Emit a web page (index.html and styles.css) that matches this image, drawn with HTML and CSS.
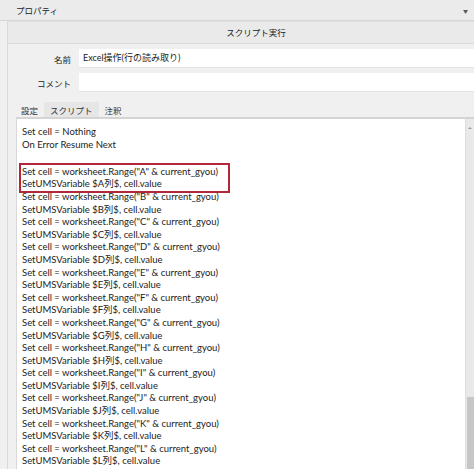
FILE: index.html
```html
<!DOCTYPE html>
<html lang="ja">
<head>
    <meta charset="UTF-8">
    <title>プロパティ</title>
    <link rel="stylesheet" href="styles.css">
</head>
<body>
    <header class="titlebar">
        <span>プロパティ</span>
        <span class="arrow">▼</span>
    </header>
    <div class="panel">
        <div class="caption">スクリプト実行</div>
        <div class="row">
            <label>名前</label>
            <div class="input">Excel操作(行の読み取り)</div>
        </div>
        <div class="row">
            <label>コメント</label>
            <div class="input"></div>
        </div>
        <nav class="tabs">
            <a href="#">設定</a>
            <a href="#" class="active">スクリプト</a>
            <a href="#">注釈</a>
        </nav>
        <div class="editor">
            <div class="code">
                <div class="line">Set cell = Nothing</div>
                <div class="line">On Error Resume Next</div>
                <div class="line">&nbsp;</div>
                <div class="mark">
                    <div class="line">Set cell = worksheet.Range("A" &amp; current_gyou)</div>
                    <div class="line">SetUMSVariable $A列$, cell.value</div>
                </div>
                <div class="line">Set cell = worksheet.Range("B" &amp; current_gyou)</div>
                <div class="line">SetUMSVariable $B列$, cell.value</div>
                <div class="line">Set cell = worksheet.Range("C" &amp; current_gyou)</div>
                <div class="line">SetUMSVariable $C列$, cell.value</div>
                <div class="line">Set cell = worksheet.Range("D" &amp; current_gyou)</div>
                <div class="line">SetUMSVariable $D列$, cell.value</div>
                <div class="line">Set cell = worksheet.Range("E" &amp; current_gyou)</div>
                <div class="line">SetUMSVariable $E列$, cell.value</div>
                <div class="line">Set cell = worksheet.Range("F" &amp; current_gyou)</div>
                <div class="line">SetUMSVariable $F列$, cell.value</div>
                <div class="line">Set cell = worksheet.Range("G" &amp; current_gyou)</div>
                <div class="line">SetUMSVariable $G列$, cell.value</div>
                <div class="line">Set cell = worksheet.Range("H" &amp; current_gyou)</div>
                <div class="line">SetUMSVariable $H列$, cell.value</div>
                <div class="line">Set cell = worksheet.Range("I" &amp; current_gyou)</div>
                <div class="line">SetUMSVariable $I列$, cell.value</div>
                <div class="line">Set cell = worksheet.Range("J" &amp; current_gyou)</div>
                <div class="line">SetUMSVariable $J列$, cell.value</div>
                <div class="line">Set cell = worksheet.Range("K" &amp; current_gyou)</div>
                <div class="line">SetUMSVariable $K列$, cell.value</div>
                <div class="line">Set cell = worksheet.Range("L" &amp; current_gyou)</div>
                <div class="line">SetUMSVariable $L列$, cell.value</div>
                <div class="line">Set cell = worksheet.Range("M" &amp; current_gyou)</div>
            </div>
            <div class="scroll">
                <span class="up"></span>
                <span class="thumb"></span>
            </div>
        </div>
    </div>
</body>
</html>
```

FILE: styles.css
```css
html, body {
    margin:0; height:469px;
    overflow:hidden;
    background:#f0f0f0;
    font-family:Lato, "Noto Sans CJK JP", sans-serif;
    font-size:9.5px; color:#222;
}
body {display:flex; flex-direction:column;}
.titlebar {
    flex:none;
    height:20px;
    display:flex; align-items:center; justify-content:space-between;
    padding:0 6px 0 16px;
    font-size:8.5px;
    background:#ebebeb;
    border-bottom:1px solid #d6d6d6;
}
.titlebar .arrow {font-size:5px; color:#555;}
.panel {
    flex:1; min-height:0;
    display:flex; flex-direction:column;
    margin-left:7px;
    border-left:1px solid #d9d9d9;
    border-top:1px solid #e0e0e0;
}
.caption {
    height:21px; line-height:22px;
    text-align:center;
    padding-left:30px;
    font-size:8.5px;
    background:#eaeaea;
    border-bottom:1px solid #dcdcdc;
}
.row {
    display:flex; align-items:center;
    margin-top:5px;
}
.row:first-of-type {margin-top:4px;}
.row label {
    width:63px; text-align:right;
    padding-right:8px;
    font-size:8.5px;
}
.row .input {
    flex:1;
    height:18px; line-height:18px;
    padding-left:4px;
    font-size:9px;
    background:#fff;
    border-bottom:1px solid #e2e2e2;
}
.tabs {
    display:flex;
    margin:10px 0 0 7px;
    font-size:8.5px;
}
.tabs a {
    padding:2px 6px 1px;
    text-decoration:none; color:#333;
}
.tabs .active {background:#e6e6e6;}
.editor {
    flex:1; min-height:0;
    display:flex;
    overflow:hidden;
    margin-left:8px;
    border-top:2px solid #d4d4d4;
    border-left:1px solid #d8d8d8;
    background:#fff;
}
.code {
    flex:1;
    padding:7px 0 0 5px;
}
.code .line {height:12.6px; line-height:12.6px; white-space:nowrap;}
.code .mark {
    width:206px;
    margin:-1px 0 -2px -3px;
    padding:1px 0 0 1px;
    border:2px solid #b3273a;
}
.scroll {
    width:8px;
    background:#e9e9e9;
    border-left:1px solid #dedede;
    position:relative;
}
.scroll .up {
    position:absolute; left:2px; top:6px;
    border:2px solid transparent;
    border-bottom:2px solid #999;
}
.scroll .thumb {
    position:absolute; left:1px; right:0;
    top:278px; bottom:0;
    background:#c6c6c6;
}
```
